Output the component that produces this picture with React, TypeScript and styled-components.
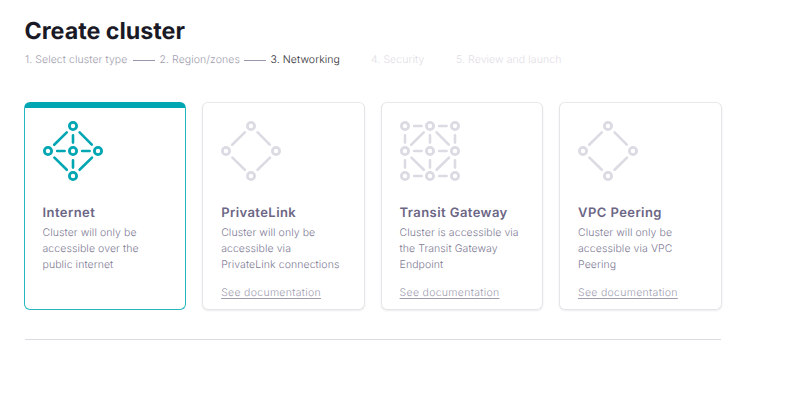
import React from "react";
import styled, { createGlobalStyle } from "styled-components";

const GlobalStyle = createGlobalStyle`
  *, *::before, *::after { box-sizing: border-box; }
  body {
    margin: 0;
    background: #fff;
    font-family: Inter, "Liberation Sans", sans-serif;
    -webkit-font-smoothing: antialiased;
    text-rendering: geometricPrecision;
  }
`;

const Page = styled.main`
  width: 721.65px;
  padding: 17px 0 0 24px;
`;

const Title = styled.h1`
  margin: 0;
  padding-left: 0.5px;
  font-size: 23.3px;
  line-height: 28px;
  font-weight: 700;
  letter-spacing: -0.02px;
  color: #1a1a26;
`;

const Steps = styled.ol`
  display: flex;
  align-items: center;
  height: 16px;
  margin: 7px 0 34px;
  padding: 0 0 0 1px;
  list-style: none;
`;

type StepState = "done" | "current" | "upcoming";
const stepColors: Record<StepState, string> = {
  done: "#a09dae",
  current: "#302e33",
  upcoming: "#dfdee6",
};

const Step = styled.li<{ $state: StepState; $width: number }>`
  display: flex;
  align-items: center;
  flex: none;
  width: ${(p) => p.$width}px;
  font-size: 10.5px;
  line-height: 16px;
  font-weight: 300;
  letter-spacing: 0.08px;
  white-space: nowrap;
  color: ${(p) => stepColors[p.$state]};
`;

const Connector = styled.span`
  width: 22px;
  height: 1px;
  margin: 0 5px 0 auto;
  background: #9a94ac;
`;

const Cards = styled.section`
  display: grid;
  grid-template-columns: repeat(4, 1fr);
  gap: 16.15px;
  height: 208px;
`;

const Card = styled.article<{ $selected?: boolean }>`
  display: flex;
  flex-direction: column;
  padding: ${(p) => (p.$selected ? "13px 17.5px 0" : "18px 17.7px 0")};
  border: 1px solid ${(p) => (p.$selected ? "#26b6bf" : "#e5e4e8")};
  border-top: ${(p) => (p.$selected ? "6px solid #00a6b2" : "1px solid #e9e8eb")};
  border-radius: 6px;
  box-shadow: ${(p) => (p.$selected ? "none" : "0 1px 2px rgba(40, 40, 60, 0.09)")};
`;

const Diagram = styled.svg<{ $selected?: boolean }>`
  display: block;
  flex: none;
  width: 60px;
  height: 60px;
  color: ${(p) => (p.$selected ? "#00a6b2" : "#dcdbe4")};
`;

const CardTitle = styled.h2`
  margin: 23px 0 3px;
  font-size: 13px;
  line-height: 18px;
  font-weight: 600;
  letter-spacing: 0.43px;
  color: #6c6685;
`;

const Description = styled.p`
  margin: 0;
  font-size: 10.5px;
  line-height: 16px;
  font-weight: 300;
  letter-spacing: 0.08px;
  white-space: pre;
  color: #7e7a94;
`;

const DocLink = styled.a`
  align-self: flex-start;
  margin-top: 12px;
  font-size: 10.5px;
  line-height: 16px;
  font-weight: 300;
  letter-spacing: 0.3px;
  color: #a09cb0;
  text-decoration: underline;
  text-decoration-skip-ink: none;
  text-decoration-thickness: 1px;
  text-underline-offset: 2px;
`;

const Divider = styled.hr`
  height: 1px;
  margin: 29px 1px 0;
  border: 0;
  background: #dcdae4;
`;

type Topology = "star" | "diamond" | "grid";

const diamondNodes = [[30, 5], [5, 30], [55, 30], [30, 55]];
const nodes: Record<Topology, number[][]> = {
  diamond: diamondNodes,
  star: [...diamondNodes, [30, 30]],
  grid: [...diamondNodes, [30, 30], [5, 5], [55, 5], [5, 55], [55, 55]],
};
const diagonals = "M11.2 23.8 23.8 11.4M36.6 11.4 48.8 23.6M11.4 36.6 23.8 48.8M36.6 48.8 49 36.6";
const cross = "M30 14.2V21.6M30 39.2V46.6M14.2 30H21.6M39.2 30H46.6";
const frame =
  "M14.2 5H21.6M39.2 5H46.6M14.2 55H21.6M39.2 55H46.6M5 14.2V21.6M5 39.2V46.6M55 14.2V21.6M55 39.2V46.6";

function TopologyIcon({ topology, selected }: { topology: Topology; selected?: boolean }) {
  return (
    <Diagram
      $selected={selected}
      viewBox="0 0 60 60"
      fill="none"
      stroke="currentColor"
      strokeWidth="2.6"
      strokeLinecap="round"
      aria-hidden="true"
    >
      <path d={diagonals} />
      {topology !== "diamond" && <path d={cross} />}
      {topology === "grid" && <path d={frame} />}
      {nodes[topology].map(([x, y]) => (
        <circle key={`${x}-${y}`} cx={x} cy={y} r="3.6" strokeWidth="2.8" />
      ))}
    </Diagram>
  );
}

const steps: { label: string; state: StepState; width: number; linked?: boolean }[] = [
  { label: "1. Select cluster type", state: "done", width: 134.5, linked: true },
  { label: "2. Region/zones", state: "done", width: 111, linked: true },
  { label: "3. Networking", state: "current", width: 100.5 },
  { label: "4. Security", state: "upcoming", width: 85 },
  { label: "5. Review and launch", state: "upcoming", width: 110 },
];

const options: { title: string; text: string; topology: Topology; selected?: boolean }[] = [
  {
    title: "Internet",
    text: "Cluster will only be\naccessible over the\npublic internet",
    topology: "star",
    selected: true,
  },
  {
    title: "PrivateLink",
    text: "Cluster will only be\naccessible via\nPrivateLink connections",
    topology: "diamond",
  },
  {
    title: "Transit Gateway",
    text: "Cluster is accessible via\nthe Transit Gateway\nEndpoint",
    topology: "grid",
  },
  {
    title: "VPC Peering",
    text: "Cluster will only be\naccessible via VPC\nPeering",
    topology: "diamond",
  },
];

export default function App() {
  return (
    <>
      <GlobalStyle />
      <Page>
        <Title>Create cluster</Title>
        <Steps>
          {steps.map((s) => (
            <Step key={s.label} $state={s.state} $width={s.width}>
              {s.label}
              {s.linked && <Connector />}
            </Step>
          ))}
        </Steps>
        <Cards>
          {options.map((o) => (
            <Card key={o.title} $selected={o.selected}>
              <TopologyIcon topology={o.topology} selected={o.selected} />
              <CardTitle>{o.title}</CardTitle>
              <Description>{o.text}</Description>
              {!o.selected && <DocLink href="#">See documentation</DocLink>}
            </Card>
          ))}
        </Cards>
        <Divider />
      </Page>
    </>
  );
}
